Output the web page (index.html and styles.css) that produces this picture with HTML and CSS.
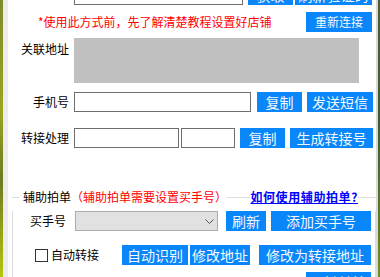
FILE: index.html
```html
<!DOCTYPE html>
<html lang="zh-CN">
<head>
    <meta charset="UTF-8">
    <meta name="viewport" content="width=device-width, initial-scale=1.0">
    <title>转接设置</title>
    <link rel="stylesheet" href="styles.css">
</head>
<body>
    <div class="screen">
        <div class="desk-left"></div>
        <div class="frame-left"></div>

        <div class="panel">
            <div class="row row-top">
                <span class="label"></span>
                <input type="text" class="field w169">
                <button class="btn w45 ml5">获取</button>
                <button class="btn w77 ml2">刷新验证码</button>
            </div>

            <div class="row row-notice">
                <span class="notice">*使用此方式前，先了解清楚教程设置好店铺</span>
                <button class="btn btn-small w66 push">重新连接</button>
            </div>

            <div class="row row-address">
                <span class="label label-top">关联地址</span>
                <div class="address-box"></div>
            </div>

            <div class="row row-phone">
                <span class="label">手机号</span>
                <input type="text" class="field w177">
                <button class="btn w45 ml6">复制</button>
                <button class="btn w66 ml5">发送短信</button>
            </div>

            <div class="row row-transfer">
                <span class="label">转接处理</span>
                <input type="text" class="field w105">
                <input type="text" class="field w54 ml2">
                <button class="btn w45 ml5">复制</button>
                <button class="btn w83 ml5">生成转接号</button>
            </div>

            <div class="group-head">
                <span class="seg seg-left"></span>
                <span class="group-title">辅助拍单</span>
                <span class="group-hint">（辅助拍单需要设置买手号）</span>
                <span class="seg seg-fill"></span>
                <a class="help-link" href="#">如何使用辅助拍单?</a>
                <span class="seg seg-right"></span>
            </div>

            <div class="group">
                <div class="row row-buyer">
                    <span class="label label-buyer">买手号</span>
                    <div class="select">
                        <svg width="9" height="5" viewBox="0 0 9 5"><path d="M0.5 0.5 L4.5 4.5 L8.5 0.5" fill="none" stroke="#555" stroke-width="1"/></svg>
                    </div>
                    <button class="btn w40 ml8">刷新</button>
                    <button class="btn w100 ml5">添加买手号</button>
                </div>

                <div class="row row-auto">
                    <input type="checkbox" class="check">
                    <span class="check-label">自动转接</span>
                    <button class="btn w66 ml23">自动识别</button>
                    <button class="btn w60 ml2">修改地址</button>
                    <button class="btn w112 ml9">修改为转接地址</button>
                </div>

                <div class="row row-last">
                    <button class="btn w65 push-last">一键转接</button>
                </div>
            </div>
        </div>

        <div class="frame-right"></div>
        <div class="desk-right"></div>
    </div>
</body>
</html>
```

FILE: styles.css
```css
html, body {
    margin: 0;
    height: 100%;
    overflow: hidden;
}
body {
    font-family: "Noto Sans CJK SC", "Microsoft YaHei", sans-serif;
    font-size: 12px;
    color: #000;
}
.screen {
    display: flex;
    height: 277px;
}
.desk-left {
    width: 3px;
    background: linear-gradient(#7f8a2c, #98a520 40%, #6f7a22 65%, #b4c60e);
}
.frame-left {
    width: 5px;
    background-color: #ececec;
}
.frame-right {
    width: 2px;
    background-color: #d9d9d9;
}
.desk-right {
    width: 2px;
    background: linear-gradient(#4b5d3a, #3e5a34 45%, #6e8e24);
}
.panel {
    flex: 1;
    background-color: #fff;
    overflow: hidden;
}
.row {
    display: flex;
    align-items: center;
    height: 20px;
}
.row-top { margin-top: -15px; }
.row-notice { margin-top: 7px; }
.row-address {
    margin-top: 6px;
    height: 45px;
    align-items: flex-start;
}
.row-phone { margin-top: 9px; }
.row-transfer { margin-top: 16px; }

.label {
    width: 66px;
    flex: none;
    box-sizing: border-box;
    padding-right: 5px;
    text-align: right;
    line-height: 20px;
}
.label-top {
    line-height: 14px;
    padding-top: 4px;
}
.field {
    box-sizing: border-box;
    height: 20px;
    margin: 0;
    border: 1px solid #6d6d6d;
    background: #fff;
    padding: 0 2px;
}
.address-box {
    width: 285px;
    height: 45px;
    background-color: #c0c0c0;
}
.notice {
    padding-left: 30px;
    color: #ff0000;
    line-height: 20px;
}
.btn {
    box-sizing: border-box;
    height: 20px;
    margin: 0;
    padding: 0;
    border: none;
    background-color: #0a86fb;
    color: #f4f8ff;
    font-family: "Noto Sans CJK SC", "Microsoft YaHei", sans-serif;
    font-size: 14px;
    line-height: 20px;
    white-space: nowrap;
    overflow: hidden;
    flex: none;
}
.btn-small { font-size: 12px; }
.push {
    margin-left: auto;
    margin-right: 4px;
}

.w40 { width: 40px; }
.w45 { width: 45px; }
.w54 { width: 54px; }
.w60 { width: 60px; }
.w65 { width: 65px; }
.w66 { width: 66px; }
.w77 { width: 77px; }
.w83 { width: 83px; }
.w100 { width: 100px; }
.w105 { width: 105px; }
.w112 { width: 112px; }
.w169 { width: 169px; }
.w177 { width: 177px; }
.ml2 { margin-left: 2px; }
.ml5 { margin-left: 5px; }
.ml6 { margin-left: 6px; }
.ml8 { margin-left: 8px; }
.ml9 { margin-left: 9px; }
.ml23 { margin-left: 23px; }

/* group box */
.group-head {
    display: flex;
    align-items: center;
    height: 14px;
    margin: 42px 0 0 4px;
}
.seg {
    height: 0;
    border-top: 1px solid #dcdcdc;
}
.seg-left { width: 7px; }
.seg-fill { flex: 1; }
.seg-right { width: 18px; }
.group-title {
    margin-left: 4px;
    line-height: 14px;
}
.group-hint {
    color: #ff0000;
    line-height: 14px;
}
.help-link {
    color: #0000ff;
    font-weight: bold;
    letter-spacing: 0.6px;
    line-height: 14px;
    text-decoration: underline;
}
.group {
    margin: -7px 0 0 4px;
    border: 1px solid #dcdcdc;
    border-top: none;
    height: 90px;
}
.row-buyer { margin-top: 14px; }
.row-auto { margin-top: 14px; }
.row-last { margin-top: 7px; }
.label-buyer {
    width: 58px;
}
.select {
    box-sizing: border-box;
    width: 143px;
    height: 20px;
    margin-left: 4px;
    border: 1px solid #adadad;
    background-color: #e1e1e1;
    display: flex;
    align-items: center;
    justify-content: flex-end;
    padding-right: 3px;
}
.check {
    appearance: none;
    -webkit-appearance: none;
    box-sizing: border-box;
    width: 13px;
    height: 13px;
    margin: 0 0 0 22px;
    border: 1px solid #333;
    background: #fff;
    flex: none;
}
.check-label {
    margin-left: 3px;
    line-height: 20px;
}
.push-last {
    margin-left: auto;
    margin-right: 4px;
}
```
